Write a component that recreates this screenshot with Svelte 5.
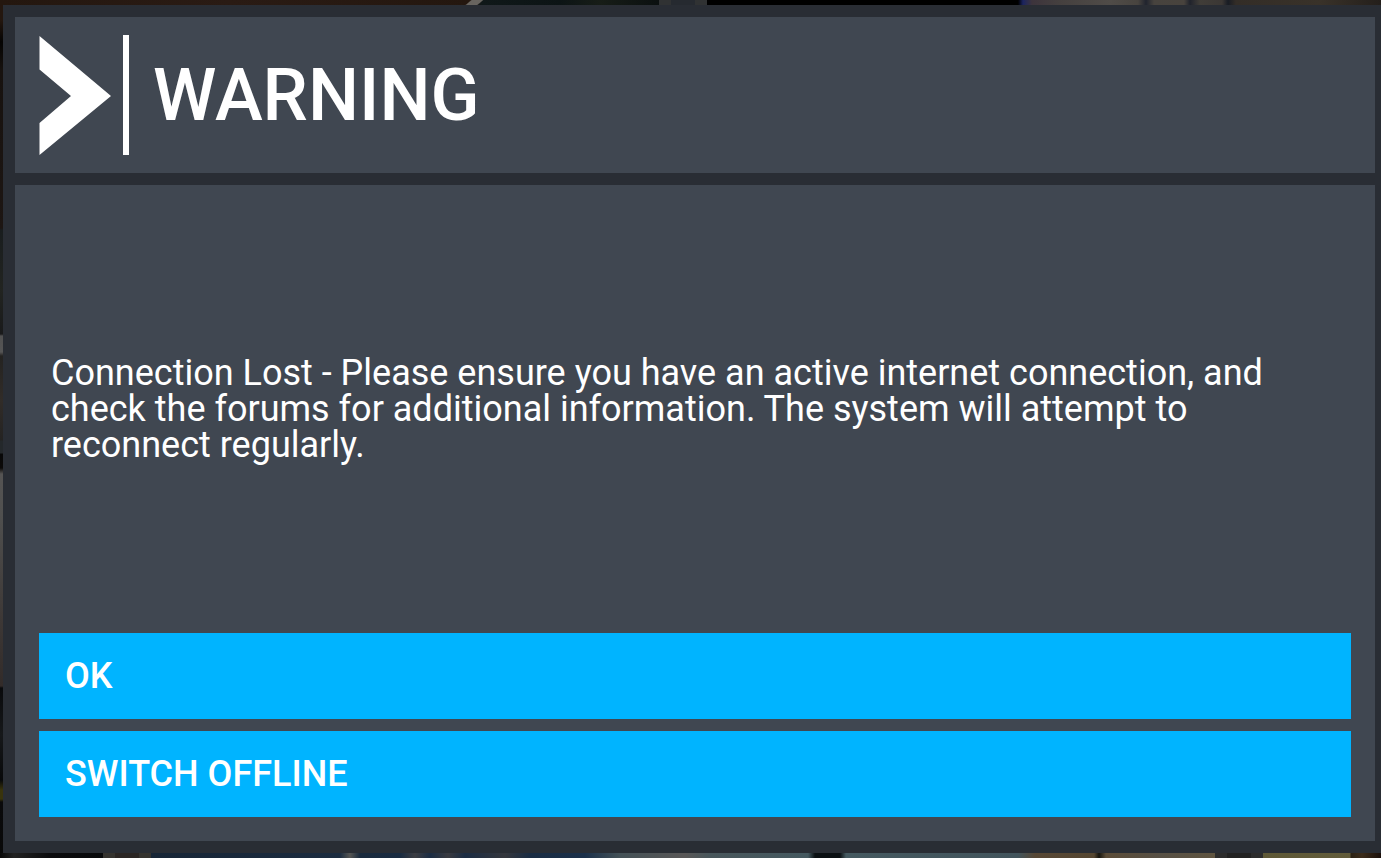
<script>
  const title = 'WARNING';
  const message =
    'Connection Lost - Please ensure you have an active internet connection, and check the forums for additional information. The system will attempt to reconnect regularly.';
  const actions = ['OK', 'SWITCH OFFLINE'];
  let open = $state(true);
</script>

<main class="scene">
  {#if open}
    <div class="dialog" role="alertdialog" aria-labelledby="dialog-title" aria-describedby="dialog-message">
      <header class="header">
        <svg class="chevron" viewBox="0 0 72 120" aria-hidden="true">
          <path d="M0.5 1L72 61L0.5 120V88L32 61L0.5 34.500Z" fill="#fff" />
        </svg>
        <span class="divider"></span>
        <h1 id="dialog-title">{title}</h1>
      </header>
      <section class="content">
        <p id="dialog-message">{message}</p>
        <div class="actions">
          {#each actions as action}
            <button type="button" onclick={() => (open = false)}>{action}</button>
          {/each}
        </div>
      </section>
    </div>
  {/if}
</main>

<style>
  :global(body) {
    margin: 0;
    background: #111;
  }

  .scene {
    box-sizing: border-box;
    display: flex;
    min-height: 100vh;
    padding: 5px 0 5px 3px;
    font-family: Roboto, sans-serif;
    color: #fff;
    background:
      linear-gradient(140deg, transparent 24%, #68645f 30%, #68645f 66%, transparent 72%) 464px 0 / 22px 5px no-repeat,
      linear-gradient(90deg,
        #24170f 0, #2a1b14 230px, #24170f 470px, #101819 482px, #0c1415 560px, #171d17 600px, #0b1010 659px,
        #303233 659px, #303233 671px, #262a30 671px, #262a30 695px, #303233 695px, #303233 707px,
        #000 707px, #000 1018px, #1b2460 1023px, #3d343c 1032px, #45403f 1060px, #504c48 1110px,
        #48443f 1138px, #20242e 1146px, #47433e 1154px, #48433d 1184px, #20232c 1190px, #403d38 1200px,
        #3b3734 1222px, #181c24 1228px, #332d27 1236px, #393229 1320px, #241f1b 100%) 0 0 / 100% 5px no-repeat,
      linear-gradient(90deg,
        #090909 0, #222 14px, #0b0b0d 50px, #08090b 103px, #35332f 103px, #35332f 115px, #2b2624 115px,
        #2b2624 139px, #35332f 139px, #35332f 151px, #172536 151px, #1c2c40 340px, #555553 350px,
        #1a2a3d 360px, #192b41 400px, #3c3d42 415px, #1b2c43 430px, #393a40 448px, #1b2c43 465px,
        #35373d 505px, #1a2c43 530px, #1b304a 585px, #445157 620px, #595757 685px, #48565b 710px,
        #455960 808px, #0b1013 815px, #0b1013 840px, #455960 846px, #42545c 1018px, #574735 1035px,
        #554631 1094px, #16150f 1099px, #5b4c38 1106px, #575045 1160px, #5f5440 1215px, #2c2c2c 1215px,
        #2c2c2c 1227px, #222 1227px, #222 1251px, #2c2c2c 1251px, #2c2c2c 1263px, #5e5836 1263px,
        #625c3b 1350px, #2b2114 1351px, #3c2c1b 1362px, #1b100b 100%) 0 100% / 100% 5px no-repeat,
      linear-gradient(180deg,
        #24170f 0, #24170f 20px, #050403 42px, #17120f 70px, #1d1613 228px, #191d1e 230px, #222421 290px,
        #191a1b 334px, #515151 336px, #555 352px, #242321 356px, #312c28 400px, #242322 440px, #24282b 441px,
        #24282b 453px, #080808 454px, #0c0a09 468px, #555453 474px, #50504f 515px, #3d3836 620px,
        #322b29 686px, #090a0c 688px, #16181a 735px, #08090a 780px, #39340d 790px, #39340d 799px,
        #0a0a0b 802px, #090909 100%) 0 0 / 3px 100% no-repeat;
  }

  .dialog {
    box-sizing: border-box;
    flex: 1;
    display: flex;
    flex-direction: column;
    gap: 12px;
    padding: 12px 6px 12px 12px;
    background: #292d34;
  }

  .header {
    display: flex;
    align-items: center;
    padding: 18px 24px;
    background: #404751;
  }

  .chevron {
    width: 72px;
    height: 120px;
  }

  .divider {
    width: 6px;
    height: 120px;
    margin: 0 24px 0 12px;
    background: #fff;
  }

  h1 {
    margin: 0;
    padding-top: 2px;
    font-size: 72px;
    line-height: 84px;
    font-weight: 500;
  }

  .content {
    flex: 1;
    display: flex;
    flex-direction: column;
    padding: 0 24px 24px;
    background: #404751;
  }

  p {
    flex: 1;
    display: flex;
    align-items: center;
    margin: 0;
    padding: 0 12px;
    font-size: 36px;
    line-height: 36px;
  }

  .actions {
    display: flex;
    flex-direction: column;
    gap: 12px;
  }

  button {
    height: 86px;
    border: 0;
    border-radius: 0;
    padding: 0 26px;
    background: #00b4ff;
    color: #fff;
    font: 500 36px/42px Roboto, sans-serif;
    text-align: left;
    cursor: pointer;
  }
</style>
